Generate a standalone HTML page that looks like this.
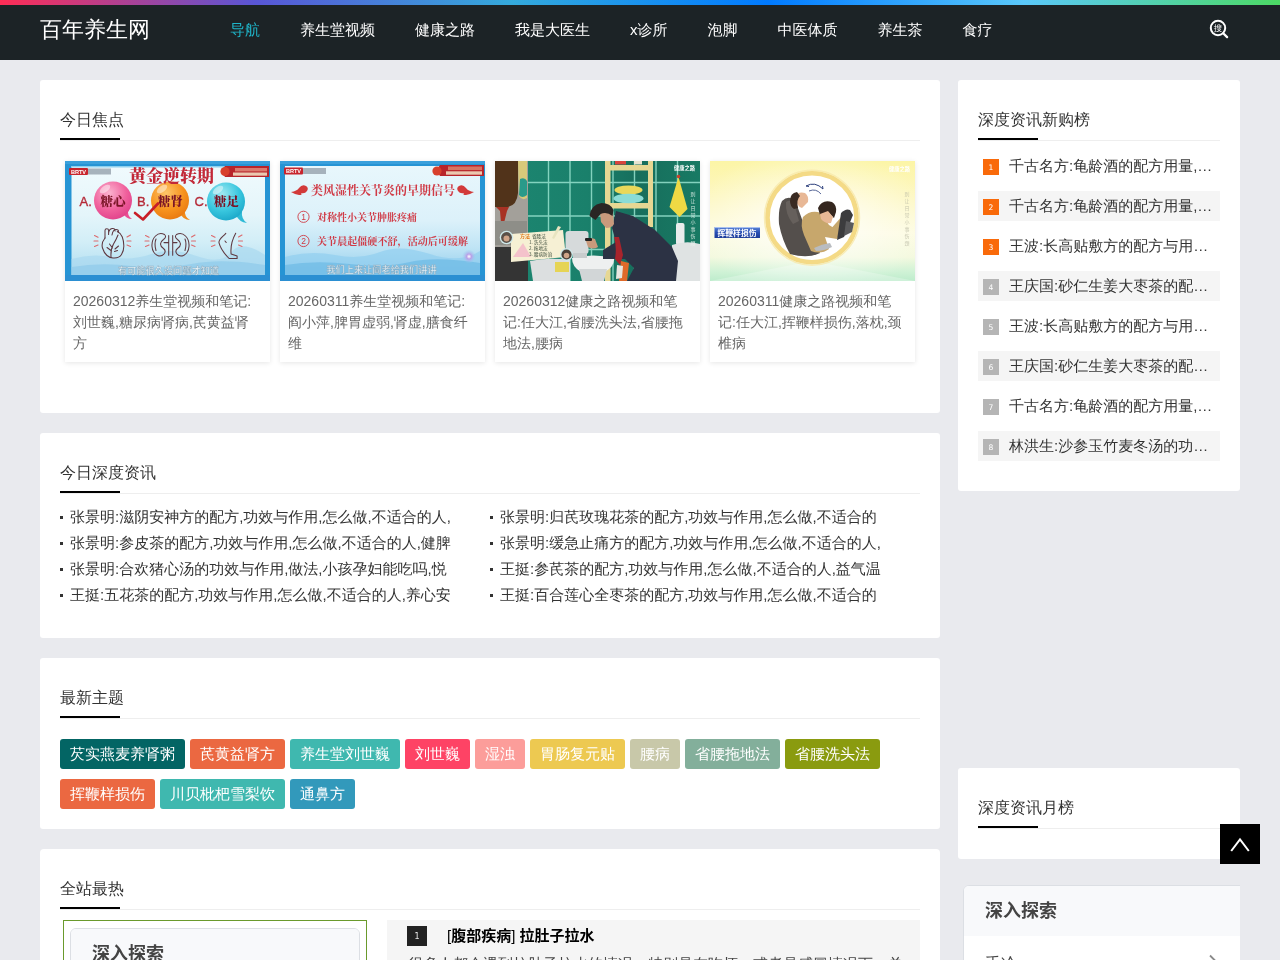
<!DOCTYPE html>
<html lang="zh-CN">
<head>
<meta charset="utf-8">
<title>百年养生网</title>
<style>
*{box-sizing:border-box;margin:0;padding:0}
html,body{width:1280px;height:960px;overflow:hidden}
body{will-change:transform;background:#e9eaee;font-family:"Liberation Sans","WenQuanYi Zen Hei","Noto Sans CJK SC",sans-serif;font-size:15px;color:#333;position:relative}
ul{list-style:none}
a{color:inherit;text-decoration:none}
b,.b{font-family:"Liberation Sans","Noto Sans CJK SC",sans-serif;font-weight:bold}
/* header */
.hd{position:absolute;left:0;top:0;width:1280px;height:60px;background:#1c2326}
.hd:before{content:"";position:absolute;left:0;top:0;width:100%;height:5px;background:linear-gradient(to right,#ff2d55,#5856d6,#34aadc,#007aff,#5ac8fa,#4cd964)}
.logo{position:absolute;left:40px;top:0;line-height:60px;font-size:22px;color:#fff}
.nav{position:absolute;left:210px;top:0;height:60px;white-space:nowrap}
.nav a{float:left;padding:0 20px;line-height:60px;font-size:15px;color:#fff}
.nav a.on{color:#1fb5c9}
.sch{position:absolute;left:1206px;top:16px;width:26px;height:26px}
/* cards */
.card{position:absolute;background:#fff;border-radius:3px;padding:20px}
.tt{position:relative;height:41px;line-height:40px;font-size:16px;color:#333;border-bottom:1px solid #eee}
.tt:after{content:"";position:absolute;left:0;bottom:0;width:60px;height:2px;background:#000}
/* focus */
.foc{position:absolute;left:20px;top:81px;width:860px}
.foc li{position:absolute;top:0;width:205px;height:201px;background:#fff;box-shadow:0 1px 5px rgba(0,0,0,.1)}
.foc li svg{display:block;width:205px;height:120px}
.foc li p{padding:10px 8px 0;font-size:14px;line-height:21px;color:#666}
/* news list */
.nl{position:absolute;left:20px;top:71px;width:860px}
.nl li{float:left;width:430px;height:26px;line-height:26px;padding-left:10px;position:relative;white-space:nowrap;overflow:hidden;font-size:15px;color:#333}
.nl li:before{content:"";position:absolute;left:0;top:12px;width:3px;height:3px;background:#333}
/* tags */
.tags{position:absolute;left:20px;top:81px;width:860px}
.tags a{float:left;height:30px;line-height:30px;padding:0 10px;margin:0 5px 10px 0;border-radius:3px;color:#fff;font-size:15px}
/* rank */
.rk{position:absolute;left:20px;top:71px;width:242px}
.rk li{height:30px;line-height:30px;margin-bottom:10px;padding-left:5px;white-space:nowrap;overflow:hidden;position:relative}
.rk li:nth-child(even){background:#f5f5f5}
.rk i{position:absolute;left:5px;top:8px;width:16px;height:16px;line-height:17.500px;text-align:center;font-style:normal;font-size:7.600px;font-family:"DejaVu Sans",sans-serif;color:#fff;background:#b5b5b5}
.rk li:nth-child(-n+3) i{background:#f96a0a}
.rk span{display:block;margin-left:26px;width:211px;overflow:hidden;text-overflow:ellipsis;white-space:nowrap;font-size:15px;color:#333}
/* explore widget */
.ex{position:absolute;background:#fff;border:1px solid #dcdfe4;border-radius:6px;overflow:hidden}
.ex h3{height:50px;line-height:51px;padding-left:21px;background:#f8f9fb;font-size:18px;color:#444;font-family:"Liberation Sans","Noto Sans CJK SC",sans-serif;font-weight:bold}
.ex .it{position:relative;height:53px;line-height:55px;padding-left:21px;font-size:16px;color:#444}
/* to top */
.totop{position:absolute;left:1220px;top:824px;width:40px;height:40px;background:#000}
</style>
</head>
<body>
<div class="hd">
  <a class="logo">百年养生网</a>
  <div class="nav"><a class="on">导航</a><a>养生堂视频</a><a>健康之路</a><a>我是大医生</a><a>x诊所</a><a>泡脚</a><a>中医体质</a><a>养生茶</a><a>食疗</a></div>
  <svg class="sch" viewBox="0 0 26 26"><circle cx="12" cy="12" r="7.2" fill="none" stroke="#fff" stroke-width="2"/><path d="M17.2 17.2L21.1 21.1" stroke="#fff" stroke-width="2.3" stroke-linecap="round"/><text x="12" y="15.2" font-size="8.5" fill="#fff" text-anchor="middle" font-family="'WenQuanYi Zen Hei','Noto Sans CJK SC',sans-serif" font-weight="bold">搜</text></svg>
</div>

<!-- card 1 : focus -->
<div class="card" style="left:40px;top:80px;width:900px;height:333px">
  <div class="tt">今日焦点</div>
  <ul class="foc">
    <li style="left:5px"><svg viewBox="0 0 205 120"><defs><linearGradient id="a1" x1="0" y1="0" x2="0" y2="1"><stop offset="0" stop-color="#f0fafd"/><stop offset=".45" stop-color="#e4f5fa"/><stop offset=".7" stop-color="#d2eef7"/><stop offset="1" stop-color="#aedcf0"/></linearGradient><radialGradient id="a2" cx=".4" cy=".3" r=".75"><stop offset="0" stop-color="#fbb3cf"/><stop offset=".6" stop-color="#f0609c"/><stop offset="1" stop-color="#e0408a"/></radialGradient><radialGradient id="a3" cx=".4" cy=".3" r=".75"><stop offset="0" stop-color="#fdc56a"/><stop offset=".6" stop-color="#f7931e"/><stop offset="1" stop-color="#e87810"/></radialGradient><radialGradient id="a4" cx=".4" cy=".3" r=".75"><stop offset="0" stop-color="#9fe9f2"/><stop offset=".6" stop-color="#38c6de"/><stop offset="1" stop-color="#1aa6c8"/></radialGradient><filter id="t1f" x="-5%" y="-20%" width="110%" height="140%"><feGaussianBlur stdDeviation=".32"/></filter></defs><rect width="205" height="120" fill="#2694d4"/><rect x="0" y="0" width="205" height="3" fill="#3aa0dc"/><rect x="6.5" y="5" width="193.5" height="109" fill="url(#a1)"/><rect x="6.5" y="5" width="193.500" height="1.500" fill="#8fd0ee"/><path d="M6.500 98q20-6 40-2t40-3 45 2 35-4 33.500 3v20H6.500z" fill="#a9d9f0" opacity=".7"/><path d="M6.500 106q30-5 60-1t60-2 73.500 1v10H6.500z" fill="#8fcbea" opacity=".7"/><rect x="0" y="114" width="205" height="6" fill="#2b8fd2"/><rect x="4" y="7" width="19" height="7" rx="1" fill="#c8242c"/><text x="13.5" y="12.7" font-size="5.6" font-weight="bold" fill="#fff" text-anchor="middle" font-family="'Liberation Sans',sans-serif">BRTV</text><rect x="23" y="7.5" width="23" height="6" fill="#9aa6b0" opacity=".85"/><path d="M160 5h44v11h-44q-5-5.5 0-11z" fill="#b8242a"/><rect x="170" y="7" width="32" height="3.4" fill="#e9a08c" opacity=".7"/><rect x="168" y="11.5" width="34" height="3.2" fill="#f3e6c8" opacity=".85"/><circle cx="160" cy="10.5" r="4.6" fill="#d8402c"/><path d="M58 52q3 6 9 6-5-3-4-10z" fill="#ea4f94"/><circle cx="48" cy="39.500" r="19" fill="url(#a2)"/><path d="M115 52q3 7 10 7-6-3-5-11z" fill="#f08a1a"/><circle cx="105" cy="39.500" r="19" fill="url(#a3)"/><path d="M171 54q3 7 11 8-6-4-5-12z" fill="#2fbad6"/><circle cx="161" cy="40.500" r="19" fill="url(#a4)"/><g fill="#fff" opacity=".45"><ellipse cx="40" cy="28" rx="6" ry="3" transform="rotate(-35 40 28)"/><ellipse cx="97" cy="28" rx="6" ry="3" transform="rotate(-35 97 28)"/><ellipse cx="153" cy="29" rx="6" ry="3" transform="rotate(-35 153 29)"/></g><text x="106.5" y="20.5" font-size="17" font-weight="900" fill="#c22838" text-anchor="middle" font-family="'Noto Serif CJK SC','Liberation Serif',serif">黄金逆转期</text><g font-family="'Liberation Sans',sans-serif" font-size="13" fill="#b52a38" stroke="#b52a38" stroke-width=".35"><text x="14.500" y="44.500">A.</text><text x="72" y="44.500">B.</text><text x="129.500" y="44.500">C.</text></g><g font-family="'Noto Serif CJK SC','Liberation Serif',serif" font-weight="900" font-size="12.500" fill="#7a1426"><text x="35.500" y="44.500">糖心</text><text x="93" y="44.500">糖肾</text><text x="149" y="45">糖足</text></g><path d="M70 52l8 6.5 15-16" fill="none" stroke="#c81e28" stroke-width="2.6" stroke-linecap="round" stroke-linejoin="round"/><g fill="none" stroke="#5e3840" stroke-width="1.050" stroke-linecap="round" stroke-linejoin="round"><path d="M40 77q-4 5-2.500 10t4.500 7.500 6 2.500q6 .500 8.500-3.500t2.300-9-1.500-8.500q-1.500-4-5-5.500"/><path d="M40 77v-7.500q0-1.800 1.800-1.800t1.800 1.800v4M43.600 72q.500-4 3.500-4.500t3 2.500M47 74q1-5.500 4-5.500t2.300 2.800"/><path d="M46 96q-.500-8 2.500-13t4.500-9M44.500 83l3 4M42 86.500l4 3M53.500 85l-3.500 3M52.500 89.500l-3 1"/><path d="M99.500 73.500q-5-2.500-9 1.500t-3.500 10.500 5.500 9q4 1.500 6.500-1.500t-.500-5.500q-3-2-3-4.500t3-4.500q3.500-2.500 1-5z"/><path d="M111.500 73.500q5-2.500 9 1.500t3.500 10.500-5.500 9q-4 1.500-6.500-1.500t.500-5.500q3-2 3-4.500t-3-4.500q-3.500-2.500-1-5z"/><path d="M91 78q-2 5 0 11.500M120 78q2 5 0 11.500"/><path d="M103.700 74.500v19.700M107.700 74.500v19.700M99 81.600h4.700M107.700 81.600h4.300"/><path d="M160.800 72.300C158.100 75.600 152.800 78.300 154.100 82.200C155.500 87.600 160.800 94.200 164.100 97.500L172.100 97.500L172.100 94.900L166.100 92.900C165.400 86.200 167.400 78.300 170.700 72.300"/><path d="M160 80l1.200 1.500"/></g><g stroke="#dc6b6e" stroke-width="1.150" stroke-linecap="round"><path d="M29.500 74.500l3.500 1.800M29 80h4M29.500 85.500l3.500-1.500M65.500 74l-3.500 2M66 80h-4M65.500 85.500l-3.500-1.500"/><path d="M80.500 74.500l3.500 1.800M80 80h4M80.500 85.500l3.500-1.500M130 74l-3.500 2M130.500 80h-4M130 85.500l-3.500-1.500"/><path d="M146.500 74.500l3.500 1.800M146 80h4M146.500 85.500l3.500-1.500M177 74l-3.500 2M177.500 80h-4M177 85.500l-3.500-1.500"/></g><text filter="url(#t1f)" x="103.500" y="113" font-size="9.200" fill="#f4f8fa" stroke="#8aa6b8" stroke-width=".45" text-anchor="middle" font-family="'Noto Sans CJK SC',sans-serif" font-weight="bold" opacity=".85">有可能很久没问题才知道</text></svg><p>20260312养生堂视频和笔记:刘世巍,糖尿病肾病,芪黄益肾方</p></li>
    <li style="left:220px"><svg viewBox="0 0 205 120"><defs><linearGradient id="b1" x1="0" y1="0" x2="0" y2="1"><stop offset="0" stop-color="#e8f7fc"/><stop offset=".5" stop-color="#dcf1fa"/><stop offset=".75" stop-color="#bfe4f5"/><stop offset="1" stop-color="#92cdec"/></linearGradient><radialGradient id="b2"><stop offset="0" stop-color="#fff"/><stop offset=".35" stop-color="#b9a0e8"/><stop offset="1" stop-color="#9ad0f0" stop-opacity="0"/></radialGradient><filter id="t2f" x="-5%" y="-20%" width="110%" height="140%"><feGaussianBlur stdDeviation=".32"/></filter></defs><rect width="205" height="120" fill="#2694d4"/><rect x="0" y="0" width="205" height="3" fill="#3aa0dc"/><rect x="5" y="5" width="195" height="109" fill="url(#b1)"/><path d="M5 96q25-7 50-2t45-3 50 2 50-3v24H5z" fill="#92cef0" opacity=".7"/><path d="M5 104q30-5 65-1t60-2 70 1v12H5z" fill="#6fbbe6" opacity=".75"/><rect x="0" y="114" width="205" height="6" fill="#2b8fd2"/><rect x="4" y="6.5" width="19" height="7" rx="1" fill="#c8242c"/><text x="13.5" y="12.2" font-size="5.6" font-weight="bold" fill="#fff" text-anchor="middle" font-family="'Liberation Sans',sans-serif">BRTV</text><rect x="23" y="7" width="23" height="6" fill="#9aa6b0" opacity=".85"/><path d="M160 4h44v11h-44q-5-5.5 0-11z" fill="#b8242a"/><rect x="168" y="5.5" width="34" height="3.6" fill="#e08a70" opacity=".8"/><rect x="166" y="10.3" width="36" height="3.4" fill="#f3e6c8" opacity=".85"/><circle cx="157" cy="10" r="4.6" fill="#d8402c"/><g fill="#d23a3a"><path d="M11 31q6-1 8-4 3-4 7-2 3 2 1 5-2 3-6 2 2 2-2 2-4-.5-8-3z"/><path d="M194 31q-6-1-8-4-3-4-7-2-3 2-1 5 2 3 6 2-2 2 2 2 4-.5 8-3z"/></g><text x="103" y="34" font-size="12" font-weight="700" fill="#d03a46" text-anchor="middle" font-family="'Noto Serif CJK SC','Liberation Serif',serif" textLength="144">类风湿性关节炎的早期信号</text><g fill="none" stroke="#cf3a44" stroke-width=".9"><circle cx="23.5" cy="55.8" r="5.6"/><circle cx="23.5" cy="80" r="5.6"/></g><g font-family="'Liberation Sans',sans-serif" font-size="8.5" fill="#cf3a44" text-anchor="middle"><text x="23.5" y="58.8">1</text><text x="23.5" y="83">2</text></g><g font-family="'Noto Serif CJK SC','Liberation Serif',serif" font-weight="700" font-size="10" fill="#d03a46"><text x="37" y="59.5" textLength="100">对称性小关节肿胀疼痛</text><text x="37" y="83.5" textLength="151">关节晨起僵硬不舒，活动后可缓解</text></g><circle cx="189" cy="95.5" r="7" fill="url(#b2)"/><text filter="url(#t2f)" x="101.500" y="111.500" font-size="9.200" fill="#f4f8fa" stroke="#8aa6b8" stroke-width=".45" text-anchor="middle" font-family="'Noto Sans CJK SC',sans-serif" font-weight="bold" opacity=".85">我们上来让阎老给我们讲讲</text></svg><p>20260311养生堂视频和笔记:阎小萍,脾胃虚弱,肾虚,膳食纤维</p></li>
    <li style="left:435px"><svg viewBox="0 0 205 120"><defs><linearGradient id="c1" x1="0" y1="0" x2="1" y2="0"><stop offset="0" stop-color="#1c8671"/><stop offset=".45" stop-color="#1a806b"/><stop offset=".7" stop-color="#176e5c"/><stop offset="1" stop-color="#187a64"/></linearGradient></defs><rect width="205" height="120" fill="url(#c1)"/><g stroke="#8fdcc8" stroke-width="1.400" opacity=".9"><path d="M53.5 0v120M75 0v120M96.5 0v120M118 0v120M139.500 0v120M161 0v120M182.500 0v120M32 21.500h173M32 55h173M32 88.500h173"/></g><rect x="0" y="0" width="33" height="120" fill="#a3a09a"/><path d="M0 0h23v32q-1 12-10 14H0z" fill="#51331a"/><path d="M23 0h9v37q-5 3-8-2z" fill="#d8c97a"/><path d="M25 18q5-2 7 2v14q-5 4-8 0z" fill="#2a9a8a"/><path d="M1 46h13l-2 4-3 12h-3l-1-12z" fill="#a83224"/><rect x="0" y="86" width="33" height="34" fill="#343434"/><rect x="0" y="60" width="32" height="24" fill="#8e8e88"/><g fill="#e6d793"><rect x="110" y="0" width="5.500" height="120"/><rect x="153" y="0" width="5" height="66"/><rect x="110" y="4" width="48" height="5.500"/><rect x="110" y="42" width="48" height="5.500"/></g><rect x="120" y="0" width="11" height="3.500" fill="#d8443c"/><rect x="139" y="0" width="8" height="3.500" fill="#e8e4d0"/><ellipse cx="133.500" cy="29" rx="14" ry="4.600" fill="#e9d85a"/><ellipse cx="133.500" cy="37.500" rx="15" ry="4.800" fill="#8adcd6"/><path d="M183.500 16l9 32-8 8-10-10z" fill="#efd944"/><circle cx="183.500" cy="15.500" r="1.800" fill="#c8402c"/><rect x="181" y="62" width="8.500" height="22" rx="2" fill="#e9ecec"/><path d="M177 84q14-5 28-1v37h-28z" fill="#dfe3e3"/><path d="M35 100q20-4 40-1v21H38z" fill="#dcdfe0"/><rect x="60" y="101" width="14" height="10" fill="#e6d455"/><rect x="70.500" y="70" width="23" height="23" rx="3" fill="#d6dadb"/><path d="M77 97q22-5 42 0 1 9-10 14H86q-9-5-9-14z" fill="#eef0f0"/><path d="M84 108h28l-3 12H87z" fill="#d2d6d7"/><rect x="78" y="92" width="14" height="5" fill="#c8cccd"/><path d="M121 50l17 5 22 14 17 17 6 14-2 20h-49l7-13-9-9h-22v-9l13-8-4-14z" fill="#2c3244"/><path d="M119 76q3 10 1 22l5 6 3-10-4-18z" fill="#a8242c"/><path d="M105 52q7-4 13-1l1 12q-2 4-8 4l-5-6z" fill="#c99a7c"/><path d="M94.500 55q1-11 12-13 9 0 12 7l-1 6q-6-5-12-2l-5 6z" fill="#2a2624"/><path d="M91 80q4-4 9-2l3 8q-5 3-10 0z" fill="#c99a7c"/><rect x="90" y="77" width="7" height="3" rx="1" fill="#222"/><path d="M126 100l8 2-2 18h-8z" fill="#e06a2a"/><path d="M122 104l6 1-1 12-6 1z" fill="#e8e6e0"/><path d="M16 73l52-4 3 27-55 5z" fill="#f6f0d4"/><path d="M63 65l3 1-7 12-2-1z" fill="#e8e4c0"/><path d="M18 96l10-14 8 14z" fill="#f4b6c8" opacity=".8"/><text x="25" y="76.500" font-size="5" fill="#e07a1a" font-weight="bold" font-family="'Noto Sans CJK SC',sans-serif">方法</text><g fill="#3a4a3a" font-size="4.600" font-family="'Noto Sans CJK SC',sans-serif"><text x="37" y="76.500">省腰法</text><text x="34" y="82.500">1. 洗头法</text><text x="34" y="88.500">2. 拖地法</text><text x="34" y="94.500">3. 腰病防治</text></g><circle cx="11.500" cy="76.500" r="6.800" fill="#cfe8ea"/><circle cx="11.500" cy="76.500" r="5.400" fill="#5a5048"/><circle cx="11.500" cy="77.500" r="3" fill="#d0a488"/><circle cx="71.500" cy="93.500" r="6.400" fill="#cfe8ea"/><circle cx="71.500" cy="93.500" r="5.100" fill="#4a4038"/><circle cx="71.500" cy="94.500" r="2.800" fill="#d0a488"/><text x="189.500" y="9" font-size="5.200" fill="#fff" text-anchor="middle" font-weight="bold" font-family="'Noto Sans CJK SC',sans-serif">健康之路</text><g fill="#e8f4ee" font-size="5" font-family="'Noto Sans CJK SC',sans-serif" text-anchor="middle" opacity=".9"><text x="198" y="35">别</text><text x="198" y="42">让</text><text x="198" y="49">日</text><text x="198" y="56">常</text><text x="198" y="63">小</text><text x="198" y="70">事</text><text x="198" y="77">伤</text><text x="198" y="84">腰</text></g></svg><p>20260312健康之路视频和笔记:任大江,省腰洗头法,省腰拖地法,腰病</p></li>
    <li style="left:650px"><svg viewBox="0 0 205 120"><defs><linearGradient id="d1" x1="0" y1="0" x2="0" y2="1"><stop offset="0" stop-color="#fcf5a6"/><stop offset=".3" stop-color="#fdf7c0"/><stop offset=".6" stop-color="#fdfbe0"/><stop offset=".8" stop-color="#f3f9de"/><stop offset=".92" stop-color="#d0f2d6"/><stop offset="1" stop-color="#bdeccc"/></linearGradient><radialGradient id="d2" cx=".5" cy=".5" r=".6"><stop offset="0" stop-color="#fff" stop-opacity=".9"/><stop offset=".6" stop-color="#fff" stop-opacity=".35"/><stop offset="1" stop-color="#fff" stop-opacity="0"/></radialGradient><linearGradient id="d3" x1="0" y1="0" x2="0" y2="1"><stop offset="0" stop-color="#5d86d8"/><stop offset=".5" stop-color="#2a50b4"/><stop offset="1" stop-color="#1d3c98"/></linearGradient></defs><rect width="205" height="120" fill="url(#d1)"/><rect width="205" height="120" fill="url(#d2)"/><path d="M102 100L0 120h205z" fill="#fff" opacity=".25"/><circle cx="102" cy="56.700" r="44.500" fill="#fff" stroke="#f4da86" stroke-width="4.600"/><circle cx="102" cy="56.700" r="47.500" fill="none" stroke="#f8e8aa" stroke-width="1.400" opacity=".8"/><path d="M72 40q6-6 13-1l8 22 12 22 5 9q-12 6-30 1-8-14-11-30-1-15 3-23z" fill="#544f4c"/><path d="M76 41q4-3 8 1l5 18-6 3q-8-10-7-22z" fill="#66605c"/><path d="M93 56q8-8 18-4l8 12 10 6-2 8-12-2 4 12q-8 6-18 2l-7-16q-4-10-1-18z" fill="#c7a76c"/><path d="M104 87q8-4 16-5l2 4q-8 4-16 4z" fill="#b9bcc0"/><path d="M119 70l14-16 5 3-10 20z" fill="#c7a76c"/><path d="M131 52q5-5 9-3l3 5-9 22-7 3z" fill="#3c3c3e"/><path d="M136 60l8 2-2 9-8 4z" fill="#5a5a5c"/><path d="M85 36q3-6 10-4 4 3 3 9l-6 6q-6-2-7-11z" fill="#e8b896"/><path d="M80 40q0-8 7-9l3 4q-4 4-2 12l-4 1q-4-3-4-8z" fill="#3a2a22"/><path d="M108 47q4-9 14-6 5 3 4 10l-2 6-6-6-8 3z" fill="#35271f"/><path d="M110 53l8-3 5 6-2 6q-6 1-10-4z" fill="#e8b896"/><path d="M96 25q9-5 17 3M96 25l3 .5M113 28l-.5-3" fill="none" stroke="#2c3f7c" stroke-width="1"/><path d="M99 30q7-3 12 3" fill="none" stroke="#2c3f7c" stroke-width=".8"/><rect x="4.500" y="66" width="45.500" height="11" fill="url(#d3)"/><rect x="4.500" y="66" width="45.500" height="1" fill="#a8c0f0"/><text x="27" y="75" font-size="7.800" font-weight="bold" fill="#fff" text-anchor="middle" font-family="'Noto Sans CJK SC',sans-serif">挥鞭样损伤</text><text x="189.500" y="9.500" font-size="5.200" fill="#fff" text-anchor="middle" font-weight="bold" font-family="'Noto Sans CJK SC',sans-serif">健康之路</text><g fill="#b9b9a4" font-size="5" font-family="'Noto Sans CJK SC',sans-serif" text-anchor="middle" opacity=".8"><text x="197" y="35">别</text><text x="197" y="42">让</text><text x="197" y="49">日</text><text x="197" y="56">常</text><text x="197" y="63">小</text><text x="197" y="70">事</text><text x="197" y="77">伤</text><text x="197" y="84">颈</text></g></svg><p>20260311健康之路视频和笔记:任大江,挥鞭样损伤,落枕,颈椎病</p></li>
  </ul>
</div>

<!-- card 2 : news -->
<div class="card" style="left:40px;top:433px;width:900px;height:205px">
  <div class="tt">今日深度资讯</div>
  <ul class="nl">
    <li>张景明:滋阴安神方的配方,功效与作用,怎么做,不适合的人,</li>
    <li>张景明:归芪玫瑰花茶的配方,功效与作用,怎么做,不适合的</li>
    <li>张景明:参皮茶的配方,功效与作用,怎么做,不适合的人,健脾</li>
    <li>张景明:缓急止痛方的配方,功效与作用,怎么做,不适合的人,</li>
    <li>张景明:合欢猪心汤的功效与作用,做法,小孩孕妇能吃吗,悦</li>
    <li>王挺:参芪茶的配方,功效与作用,怎么做,不适合的人,益气温</li>
    <li>王挺:五花茶的配方,功效与作用,怎么做,不适合的人,养心安</li>
    <li>王挺:百合莲心全枣茶的配方,功效与作用,怎么做,不适合的</li>
  </ul>
</div>

<!-- card 3 : tags -->
<div class="card" style="left:40px;top:658px;width:900px;height:171px">
  <div class="tt">最新主题</div>
  <div class="tags">
    <a style="background:#036564">芡实燕麦养肾粥</a><a style="background:#eb6841">芪黄益肾方</a><a style="background:#3fb8af">养生堂刘世巍</a><a style="background:#fe4365">刘世巍</a><a style="background:#fc9d9a">湿浊</a><a style="background:#edc951">胃肠复元贴</a><a style="background:#c8c8a9">腰病</a><a style="background:#83af9b">省腰拖地法</a><a style="background:#8a9b0f">省腰洗头法</a><a style="background:#eb6841">挥鞭样损伤</a><a style="background:#3fb8af">川贝枇杷雪梨饮</a><a style="background:#3299bb">通鼻方</a>
  </div>
</div>

<!-- card 4 : hot -->
<div class="card" style="left:40px;top:849px;width:900px;height:200px;border-radius:4px 4px 0 0">
  <div class="tt">全站最热</div>
  <div style="position:absolute;left:23px;top:71px;width:304px;height:200px;border:1px solid #6a9a2c"></div>
  <div class="ex" style="left:30px;top:79px;width:290px;height:200px"><h3>深入探索</h3></div>
  <div style="position:absolute;left:347px;top:71px;width:533px;height:100px;background:#f5f5f5">
    <span style="position:absolute;left:20px;top:6px;width:20px;height:20px;line-height:22.500px;text-align:center;background:#222;color:#e8e8e8;font-size:8px;font-family:'DejaVu Sans',sans-serif">1</span>
    <div style="position:absolute;left:60px;top:0;height:32px;line-height:32px;font-size:15px;color:#000;white-space:nowrap">[<b>腹部疾病</b>]<b> 拉肚子拉水</b></div>
    <div style="position:absolute;left:21px;top:32px;font-size:15px;line-height:24px;color:#444;white-space:nowrap;width:512px;overflow:hidden">很多人都会遇到拉肚子拉水的情况，特别是在吃坏、或者是感冒情况下，单</div>
  </div>
</div>

<!-- sidebar 1 -->
<div class="card" style="left:958px;top:80px;width:282px;height:411px">
  <div class="tt">深度资讯新购榜</div>
  <ul class="rk">
    <li><i>1</i><span>千古名方:龟龄酒的配方用量,功效与作用,禁忌</span></li>
    <li><i>2</i><span>千古名方:龟龄酒的配方用量,功效与作用,禁忌</span></li>
    <li><i>3</i><span>王波:长高贴敷方的配方与用法,功效与作用</span></li>
    <li><i>4</i><span>王庆国:砂仁生姜大枣茶的配方,功效与作用</span></li>
    <li><i>5</i><span>王波:长高贴敷方的配方与用法,功效与作用</span></li>
    <li><i>6</i><span>王庆国:砂仁生姜大枣茶的配方,功效与作用</span></li>
    <li><i>7</i><span>千古名方:龟龄酒的配方用量,功效与作用,禁忌</span></li>
    <li><i>8</i><span>林洪生:沙参玉竹麦冬汤的功效与作用,做法</span></li>
  </ul>
</div>

<!-- sidebar 2 -->
<div class="card" style="left:958px;top:768px;width:282px;height:91px">
  <div class="tt">深度资讯月榜</div>
</div>

<!-- sidebar explore (clipped at column edge) -->
<div style="position:absolute;left:958px;top:880px;width:282px;height:80px;overflow:hidden">
  <div class="ex" style="left:5px;top:5px;width:300px;height:200px"><h3>深入探索</h3>
    <div class="it">手冷<svg style="position:absolute;left:244px;top:18px" width="12" height="18" viewBox="0 0 12 18"><path d="M2 1.5l7 7-7 7" fill="none" stroke="#8a8a8a" stroke-width="1.8"/></svg></div>
  </div>
</div>

<div class="totop"><svg width="40" height="40" viewBox="0 0 40 40"><path d="M11.2 27L20 15.4L28.8 27" fill="none" stroke="#fff" stroke-width="2"/></svg></div>
</body>
</html>
